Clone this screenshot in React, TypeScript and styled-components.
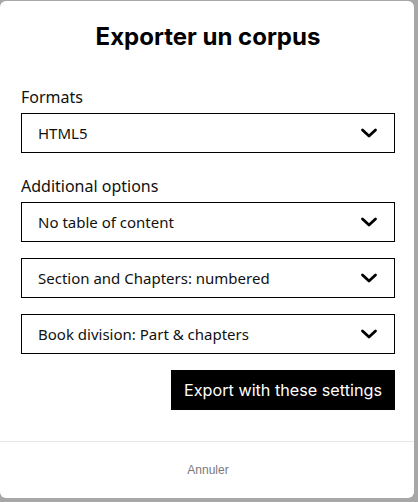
import React from "react";
import styled, { createGlobalStyle } from "styled-components";

const Global = createGlobalStyle`
  html, body { margin: 0; padding: 0; background: #a7a7a7; }
  body { width: 418px; height: 502px; overflow: hidden; }
`;

const Modal = styled.div`
  margin-top: 1px;
  width: 414px;
  height: 497px;
  background: #ffffff;
  border-radius: 6px;
  display: flex;
  flex-direction: column;
  overflow: hidden;
`;

const Body = styled.div`
  padding: 19px 19px 0 21px;
  display: flex;
  flex-direction: column;
  flex: 1;
`;

const Title = styled.h2`
  margin: 0;
  font-family: Inter, "Liberation Sans", sans-serif;
  font-weight: 700;
  font-size: 24px;
  line-height: 34px;
  color: #000;
  text-align: center;
`;

const Label = styled.div<{ $top: number }>`
  margin-top: ${(p) => p.$top}px;
  font-family: "Noto Sans", sans-serif;
  font-size: 16px;
  line-height: 22px;
  color: #111;
`;

const SelectBox = styled.div<{ $top: number }>`
  margin-top: ${(p) => p.$top}px;
  height: 40px;
  box-sizing: border-box;
  border: 1px solid #000;
  display: flex;
  align-items: center;
  justify-content: space-between;
  padding: 0 16px 0 16px;
  font-family: "Noto Sans", sans-serif;
  font-size: 15px;
  color: #111;
`;

const Chevron = () => (
  <svg width="18" height="12" viewBox="0 0 18 12">
    <path d="M2.5 3 L9 9 L15.5 3" fill="none" stroke="#000" strokeWidth="2.8" strokeLinecap="round" strokeLinejoin="round" />
  </svg>
);

const Actions = styled.div`
  margin-top: 16px;
  display: flex;
  justify-content: flex-end;
`;

const PrimaryButton = styled.button`
  height: 40px;
  width: 224px;
  border: none;
  background: #000;
  color: #fff;
  font-family: Inter, "Liberation Sans", sans-serif;
  font-size: 16.2px;
  padding: 0;
  cursor: pointer;
`;

const Footer = styled.div`
  border-top: 1px solid #e6e6e6;
  height: 56px;
  display: flex;
  align-items: center;
  justify-content: center;
  padding: 0 19px 0 21px;
  font-family: "Liberation Sans", Arial, sans-serif;
  font-size: 12px;
  color: #7a7a7a;
`;

function Select({ value, top }: { value: string; top: number }) {
  return (
    <SelectBox $top={top}>
      <span>{value}</span>
      <Chevron />
    </SelectBox>
  );
}

export default function App() {
  return (
    <>
      <Global />
      <Modal>
        <Body>
          <Title>Exporter un corpus</Title>
          <Label $top={32}>Formats</Label>
          <Select top={5} value="HTML5" />
          <Label $top={22}>Additional options</Label>
          <Select top={5} value="No table of content" />
          <Select top={16} value="Section and Chapters: numbered" />
          <Select top={16} value="Book division: Part & chapters" />
          <Actions>
            <PrimaryButton>Export with these settings</PrimaryButton>
          </Actions>
        </Body>
        <Footer>Annuler</Footer>
      </Modal>
    </>
  );
}
